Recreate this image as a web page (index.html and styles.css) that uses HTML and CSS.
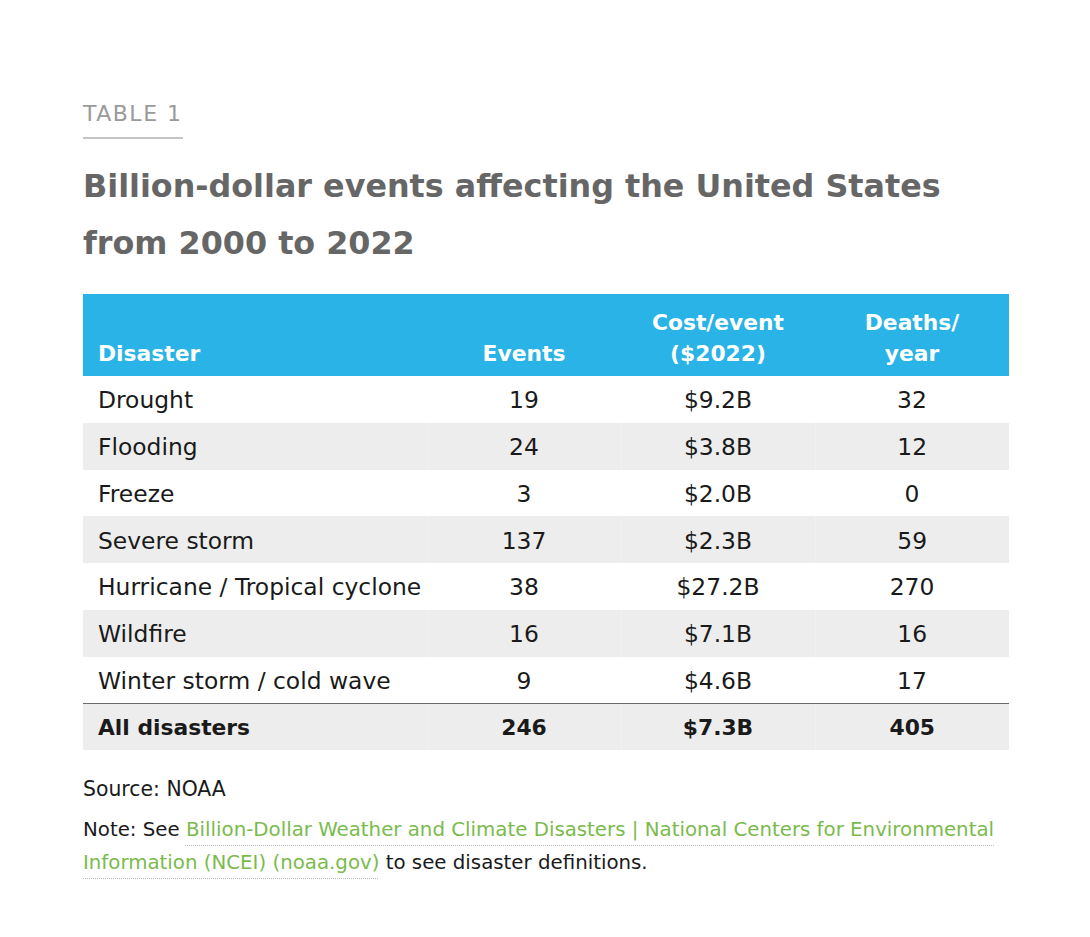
FILE: index.html
```html
<!DOCTYPE html>
<html lang="en">
<head>
<meta charset="utf-8">
<title>Table 1</title>
<link rel="stylesheet" href="styles.css">
</head>
<body>
<main class="figure">
  <div class="label">TABLE 1</div>
  <h1 class="title">Billion-dollar events affecting the United States from 2000 to 2022</h1>
  <table class="data">
    <colgroup>
      <col class="col-name">
      <col class="col-num">
      <col class="col-num">
      <col class="col-num">
    </colgroup>
    <thead>
      <tr>
        <th class="c-name">Disaster</th>
        <th>Events</th>
        <th>Cost/event<br>($2022)</th>
        <th>Deaths/<br>year</th>
      </tr>
    </thead>
    <tbody>
      <tr><td class="c-name">Drought</td><td>19</td><td>$9.2B</td><td>32</td></tr>
      <tr class="alt"><td class="c-name">Flooding</td><td>24</td><td>$3.8B</td><td>12</td></tr>
      <tr><td class="c-name">Freeze</td><td>3</td><td>$2.0B</td><td>0</td></tr>
      <tr class="alt"><td class="c-name">Severe storm</td><td>137</td><td>$2.3B</td><td>59</td></tr>
      <tr><td class="c-name">Hurricane / Tropical cyclone</td><td>38</td><td>$27.2B</td><td>270</td></tr>
      <tr class="alt"><td class="c-name">Wildfire</td><td>16</td><td>$7.1B</td><td>16</td></tr>
      <tr><td class="c-name">Winter storm / cold wave</td><td>9</td><td>$4.6B</td><td>17</td></tr>
    </tbody>
    <tfoot>
      <tr class="total"><td class="c-name">All disasters</td><td>246</td><td>$7.3B</td><td>405</td></tr>
    </tfoot>
  </table>
  <p class="source">Source: NOAA</p>
  <p class="note">Note: See <a class="link" href="#">Billion-Dollar Weather and Climate Disasters | National Centers for Environmental</a> <a class="link" href="#">Information (NCEI) (noaa.gov)</a> to see disaster definitions.</p>
</main>
</body>
</html>
```

FILE: styles.css
```css
html, body {
  margin: 0;
  padding: 0;
  background: #ffffff;
}

body {
  font-family: "DejaVu Sans", "Open Sans", sans-serif;
  color: #1a1a1a;
}

.figure {
  width: 926px;
  padding: 100px 0 0 83px;
}

.label {
  display: inline-block;
  font-size: 22px;
  letter-spacing: 1.5px;
  color: #9a9a9a;
  line-height: 28px;
  padding-bottom: 9px;
  border-bottom: 2px solid #c4c4c4;
}

.title {
  margin: 18px 0 0 0;
  font-size: 31.8px;
  line-height: 57px;
  font-weight: 700;
  color: #666666;
  width: 900px;
}

.data {
  margin-top: 23px;
  width: 926px;
  border-collapse: collapse;
  table-layout: fixed;
}

.col-name {
  width: 344px;
}

.col-num {
  width: 194px;
}

.data th {
  box-sizing: border-box;
  background: #29b3e6;
  color: #ffffff;
  font-size: 21.8px;
  font-weight: 700;
  height: 82px;
  vertical-align: bottom;
  padding: 0 0 7px 0;
  line-height: 31px;
  text-align: center;
}

.data td {
  box-sizing: border-box;
  height: 46.75px;
  padding: 2px 0 0 0;
  font-size: 23.4px;
  text-align: center;
  vertical-align: middle;
  line-height: 28px;
}

.data .c-name {
  text-align: left;
  padding-left: 15px;
}

.data tr.alt td {
  background: #ededed;
}

.data tr.alt td + td,
.data tr.total td + td {
  border-left: 1px solid #f1f1f1;
}

.data tr.total td {
  background: #ededed;
  font-size: 21.8px;
  font-weight: 700;
  border-top: 1px solid #6a6a6a;
}

.source {
  margin: 23px 0 0 0;
  font-size: 20.4px;
  line-height: 33px;
}

.note {
  margin: 7px 0 0 0;
  font-size: 19.8px;
  line-height: 33px;
  width: 926px;
}

.link {
  color: #7bba4d;
  text-decoration-line: underline;
  text-decoration-style: dotted;
  text-decoration-color: #bdbdbd;
  text-decoration-thickness: 1px;
  text-underline-offset: 9px;
}
```
